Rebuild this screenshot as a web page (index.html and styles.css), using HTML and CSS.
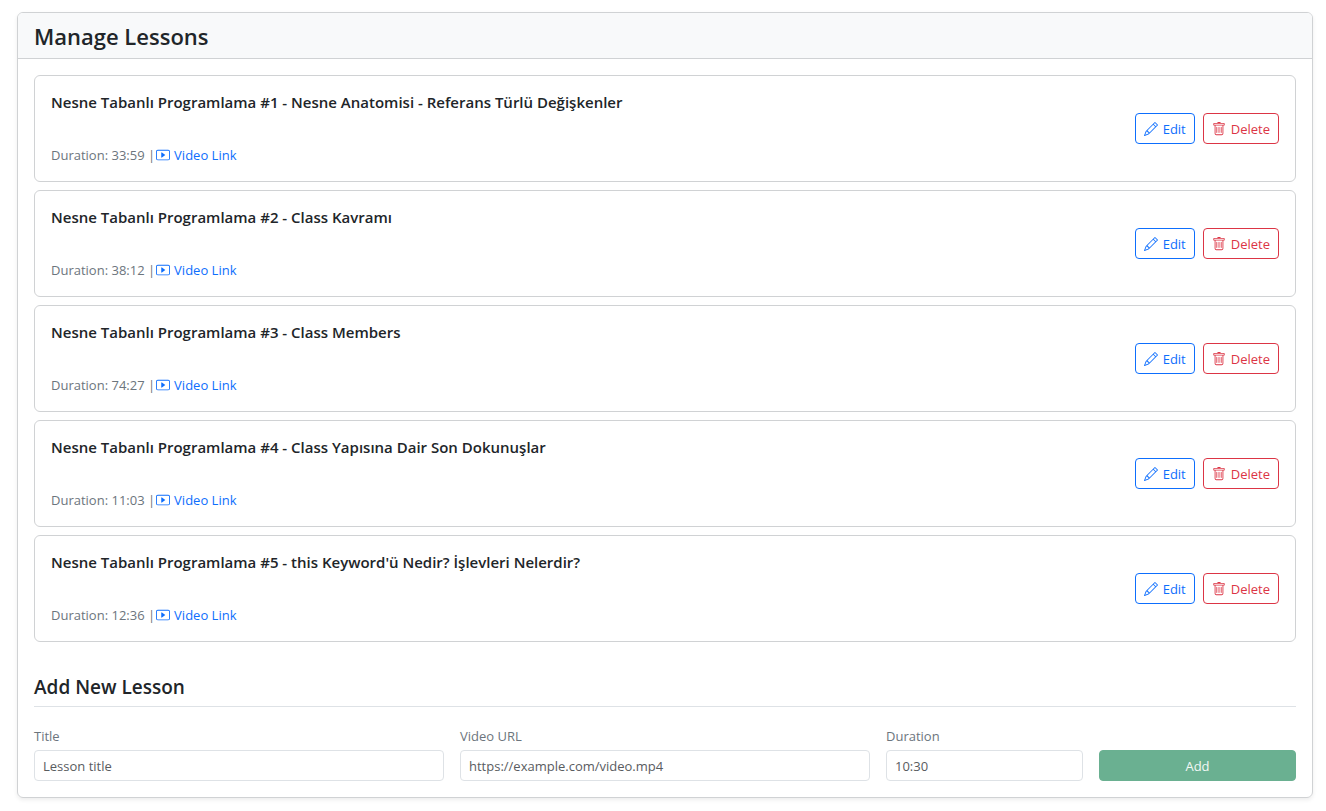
FILE: index.html
```html
<!DOCTYPE html>
<html lang="en">
<head>
<meta charset="utf-8">
<meta name="viewport" content="width=device-width, initial-scale=1">
<title>Manage Lessons</title>
<link rel="stylesheet" href="styles.css">
</head>
<body>
<svg class="sprite" aria-hidden="true">
  <symbol id="play" viewBox="0 0 16 16"><path d="M0 4a2 2 0 0 1 2-2h12a2 2 0 0 1 2 2v8a2 2 0 0 1-2 2H2a2 2 0 0 1-2-2zm15 0a1 1 0 0 0-1-1H2a1 1 0 0 0-1 1v8a1 1 0 0 0 1 1h12a1 1 0 0 0 1-1z"/><path d="M6.79 5.093A.5.5 0 0 0 6 5.5v5a.5.5 0 0 0 .79.407l3.5-2.5a.5.5 0 0 0 0-.814z"/></symbol>
  <symbol id="pencil" viewBox="0 0 16 16"><path d="M12.146.146a.5.5 0 0 1 .708 0l3 3a.5.5 0 0 1 0 .708l-10 10a.5.5 0 0 1-.168.11l-5 2a.5.5 0 0 1-.65-.65l2-5a.5.5 0 0 1 .11-.168zM11.207 2.5 13.5 4.793 14.793 3.5 12.5 1.207zm1.586 3L10.5 3.207 4 9.707V10h.5a.5.5 0 0 1 .5.5v.5h.5a.5.5 0 0 1 .5.5v.5h.293zm-9.761 5.175-.106.106-1.528 3.821 3.821-1.528.106-.106A.5.5 0 0 1 5 12.5V12h-.5a.5.5 0 0 1-.5-.5V11h-.5a.5.5 0 0 1-.468-.325"/></symbol>
  <symbol id="trash" viewBox="0 0 16 16"><path d="M5.5 5.5A.5.5 0 0 1 6 6v6a.5.5 0 0 1-1 0V6a.5.5 0 0 1 .5-.5m2.5 0a.5.5 0 0 1 .5.5v6a.5.5 0 0 1-1 0V6a.5.5 0 0 1 .5-.5m3 .5a.5.5 0 0 0-1 0v6a.5.5 0 0 0 1 0z"/><path d="M14.500 3a1 1 0 0 1-1 1H13v9a2 2 0 0 1-2 2H5a2 2 0 0 1-2-2V4h-.5a1 1 0 0 1-1-1V2a1 1 0 0 1 1-1H6a1 1 0 0 1 1-1h2a1 1 0 0 1 1 1h3.500a1 1 0 0 1 1 1zM4.118 4 4 4.059V13a1 1 0 0 0 1 1h6a1 1 0 0 0 1-1V4.059L11.882 4zM2.500 3h11V2h-11z"/></symbol>
</svg>
<main class="page">
  <section class="card">
    <header class="card-header"><h1 class="card-title">Manage Lessons</h1></header>
    <div class="card-body">
      <ul class="lessons">
        <li class="lesson">
          <div class="lesson-info">
            <h2 class="lesson-title">Nesne Tabanlı Programlama #1 - Nesne Anatomisi - Referans Türlü Değişkenler</h2>
            <p class="meta">Duration: 33:59 |<a class="link" href="#"><svg class="icon"><use href="#play"/></svg>Video Link</a></p>
          </div>
          <div class="actions">
            <button class="btn btn-edit" type="button"><svg class="icon"><use href="#pencil"/></svg>Edit</button>
            <button class="btn btn-delete" type="button"><svg class="icon"><use href="#trash"/></svg>Delete</button>
          </div>
        </li>
        <li class="lesson">
          <div class="lesson-info">
            <h2 class="lesson-title">Nesne Tabanlı Programlama #2 - Class Kavramı</h2>
            <p class="meta">Duration: 38:12 |<a class="link" href="#"><svg class="icon"><use href="#play"/></svg>Video Link</a></p>
          </div>
          <div class="actions">
            <button class="btn btn-edit" type="button"><svg class="icon"><use href="#pencil"/></svg>Edit</button>
            <button class="btn btn-delete" type="button"><svg class="icon"><use href="#trash"/></svg>Delete</button>
          </div>
        </li>
        <li class="lesson">
          <div class="lesson-info">
            <h2 class="lesson-title">Nesne Tabanlı Programlama #3 - Class Members</h2>
            <p class="meta">Duration: 74:27 |<a class="link" href="#"><svg class="icon"><use href="#play"/></svg>Video Link</a></p>
          </div>
          <div class="actions">
            <button class="btn btn-edit" type="button"><svg class="icon"><use href="#pencil"/></svg>Edit</button>
            <button class="btn btn-delete" type="button"><svg class="icon"><use href="#trash"/></svg>Delete</button>
          </div>
        </li>
        <li class="lesson">
          <div class="lesson-info">
            <h2 class="lesson-title">Nesne Tabanlı Programlama #4 - Class Yapısına Dair Son Dokunuşlar</h2>
            <p class="meta">Duration: 11:03 |<a class="link" href="#"><svg class="icon"><use href="#play"/></svg>Video Link</a></p>
          </div>
          <div class="actions">
            <button class="btn btn-edit" type="button"><svg class="icon"><use href="#pencil"/></svg>Edit</button>
            <button class="btn btn-delete" type="button"><svg class="icon"><use href="#trash"/></svg>Delete</button>
          </div>
        </li>
        <li class="lesson">
          <div class="lesson-info">
            <h2 class="lesson-title">Nesne Tabanlı Programlama #5 - this Keyword'ü Nedir? İşlevleri Nelerdir?</h2>
            <p class="meta">Duration: 12:36 |<a class="link" href="#"><svg class="icon"><use href="#play"/></svg>Video Link</a></p>
          </div>
          <div class="actions">
            <button class="btn btn-edit" type="button"><svg class="icon"><use href="#pencil"/></svg>Edit</button>
            <button class="btn btn-delete" type="button"><svg class="icon"><use href="#trash"/></svg>Delete</button>
          </div>
        </li>
      </ul>
      <h2 class="form-title">Add New Lesson</h2>
      <form class="form">
        <div class="field field-wide">
          <label class="label" for="title">Title</label>
          <input class="input" id="title" type="text" placeholder="Lesson title">
        </div>
        <div class="field field-wide">
          <label class="label" for="url">Video URL</label>
          <input class="input" id="url" type="text" placeholder="https://example.com/video.mp4">
        </div>
        <div class="field">
          <label class="label" for="duration">Duration</label>
          <input class="input" id="duration" type="text" placeholder="10:30">
        </div>
        <button class="btn btn-add" type="submit" disabled>Add</button>
      </form>
    </div>
  </section>
</main>
</body>
</html>
```
FILE: styles.css
```css
* { box-sizing: border-box; }
body {
  margin: 0;
  background: #fff;
  color: #212529;
  font-family: "Segoe UI", "Open Sans", "Noto Sans", sans-serif;
  font-size: 13px;
}
h1, h2, p, ul { margin: 0; padding: 0; }
.sprite { display: none; }
.page { padding: 12px 13px 12px 17px; }
.card {
  border: 1px solid #d0d2d4;
  border-radius: 6px;
  box-shadow: 0 2px 4px rgba(0, 0, 0, 0.075);
}
.card-header {
  padding: 9px 16px 7px;
  background: #f8f9fa;
  border-bottom: 1px solid #d0d2d4;
  border-radius: 5px 5px 0 0;
}
.card-title { font-size: 22px; font-weight: 600; line-height: 29px; }
.card-body { padding: 16px; }
.lessons { display: grid; gap: 8px; list-style: none; }
.lesson {
  display: flex;
  align-items: center;
  justify-content: space-between;
  gap: 16px;
  padding: 16px;
  border: 1px solid #d0d2d4;
  border-radius: 6px;
}
.lesson-title { margin-bottom: 34px; font-size: 15px; font-weight: 600; line-height: 20px; }
.meta { color: #6c757d; line-height: 19px; }
.link { margin-left: 1px; color: #0d6efd; text-decoration: none; }
.icon { flex: none; width: 14px; height: 14px; fill: currentColor; }
.link .icon { margin-right: 4px; vertical-align: -2px; }
.actions { display: flex; flex: none; gap: 8px; }
.btn {
  display: inline-flex;
  align-items: center;
  justify-content: center;
  gap: 5px;
  padding: 5px 8px 3px;
  border: 1px solid;
  border-radius: 4px;
  background: transparent;
  font: inherit;
  line-height: 21px;
}
.btn .icon { margin-bottom: 2px; }
.btn-edit { color: #0d6efd; }
.btn-delete { color: #dc3545; }
.form-title {
  margin: 33px 0 16px;
  padding-bottom: 7px;
  border-bottom: 1px solid #dee2e6;
  font-size: 19px;
  font-weight: 600;
  line-height: 24px;
}
.form { display: grid; grid-template-columns: repeat(12, 1fr); gap: 16px; align-items: end; }
.field { grid-column: span 2; min-width: 0; }
.field-wide { grid-column: span 4; }
.label { display: block; margin: 3px 0; color: #6c757d; line-height: 21px; }
.input {
  display: block;
  width: 100%;
  padding: 4px 8px;
  border: 1px solid #dee2e6;
  border-radius: 4px;
  background: #fff;
  color: #212529;
  font: inherit;
  line-height: 21px;
  height: 31px;
}
.input::placeholder { color: #595c5f; opacity: 1; }
.btn-add { grid-column: span 2; border-color: #6ab091; background: #6ab091; color: #f2f8f5; }
```
